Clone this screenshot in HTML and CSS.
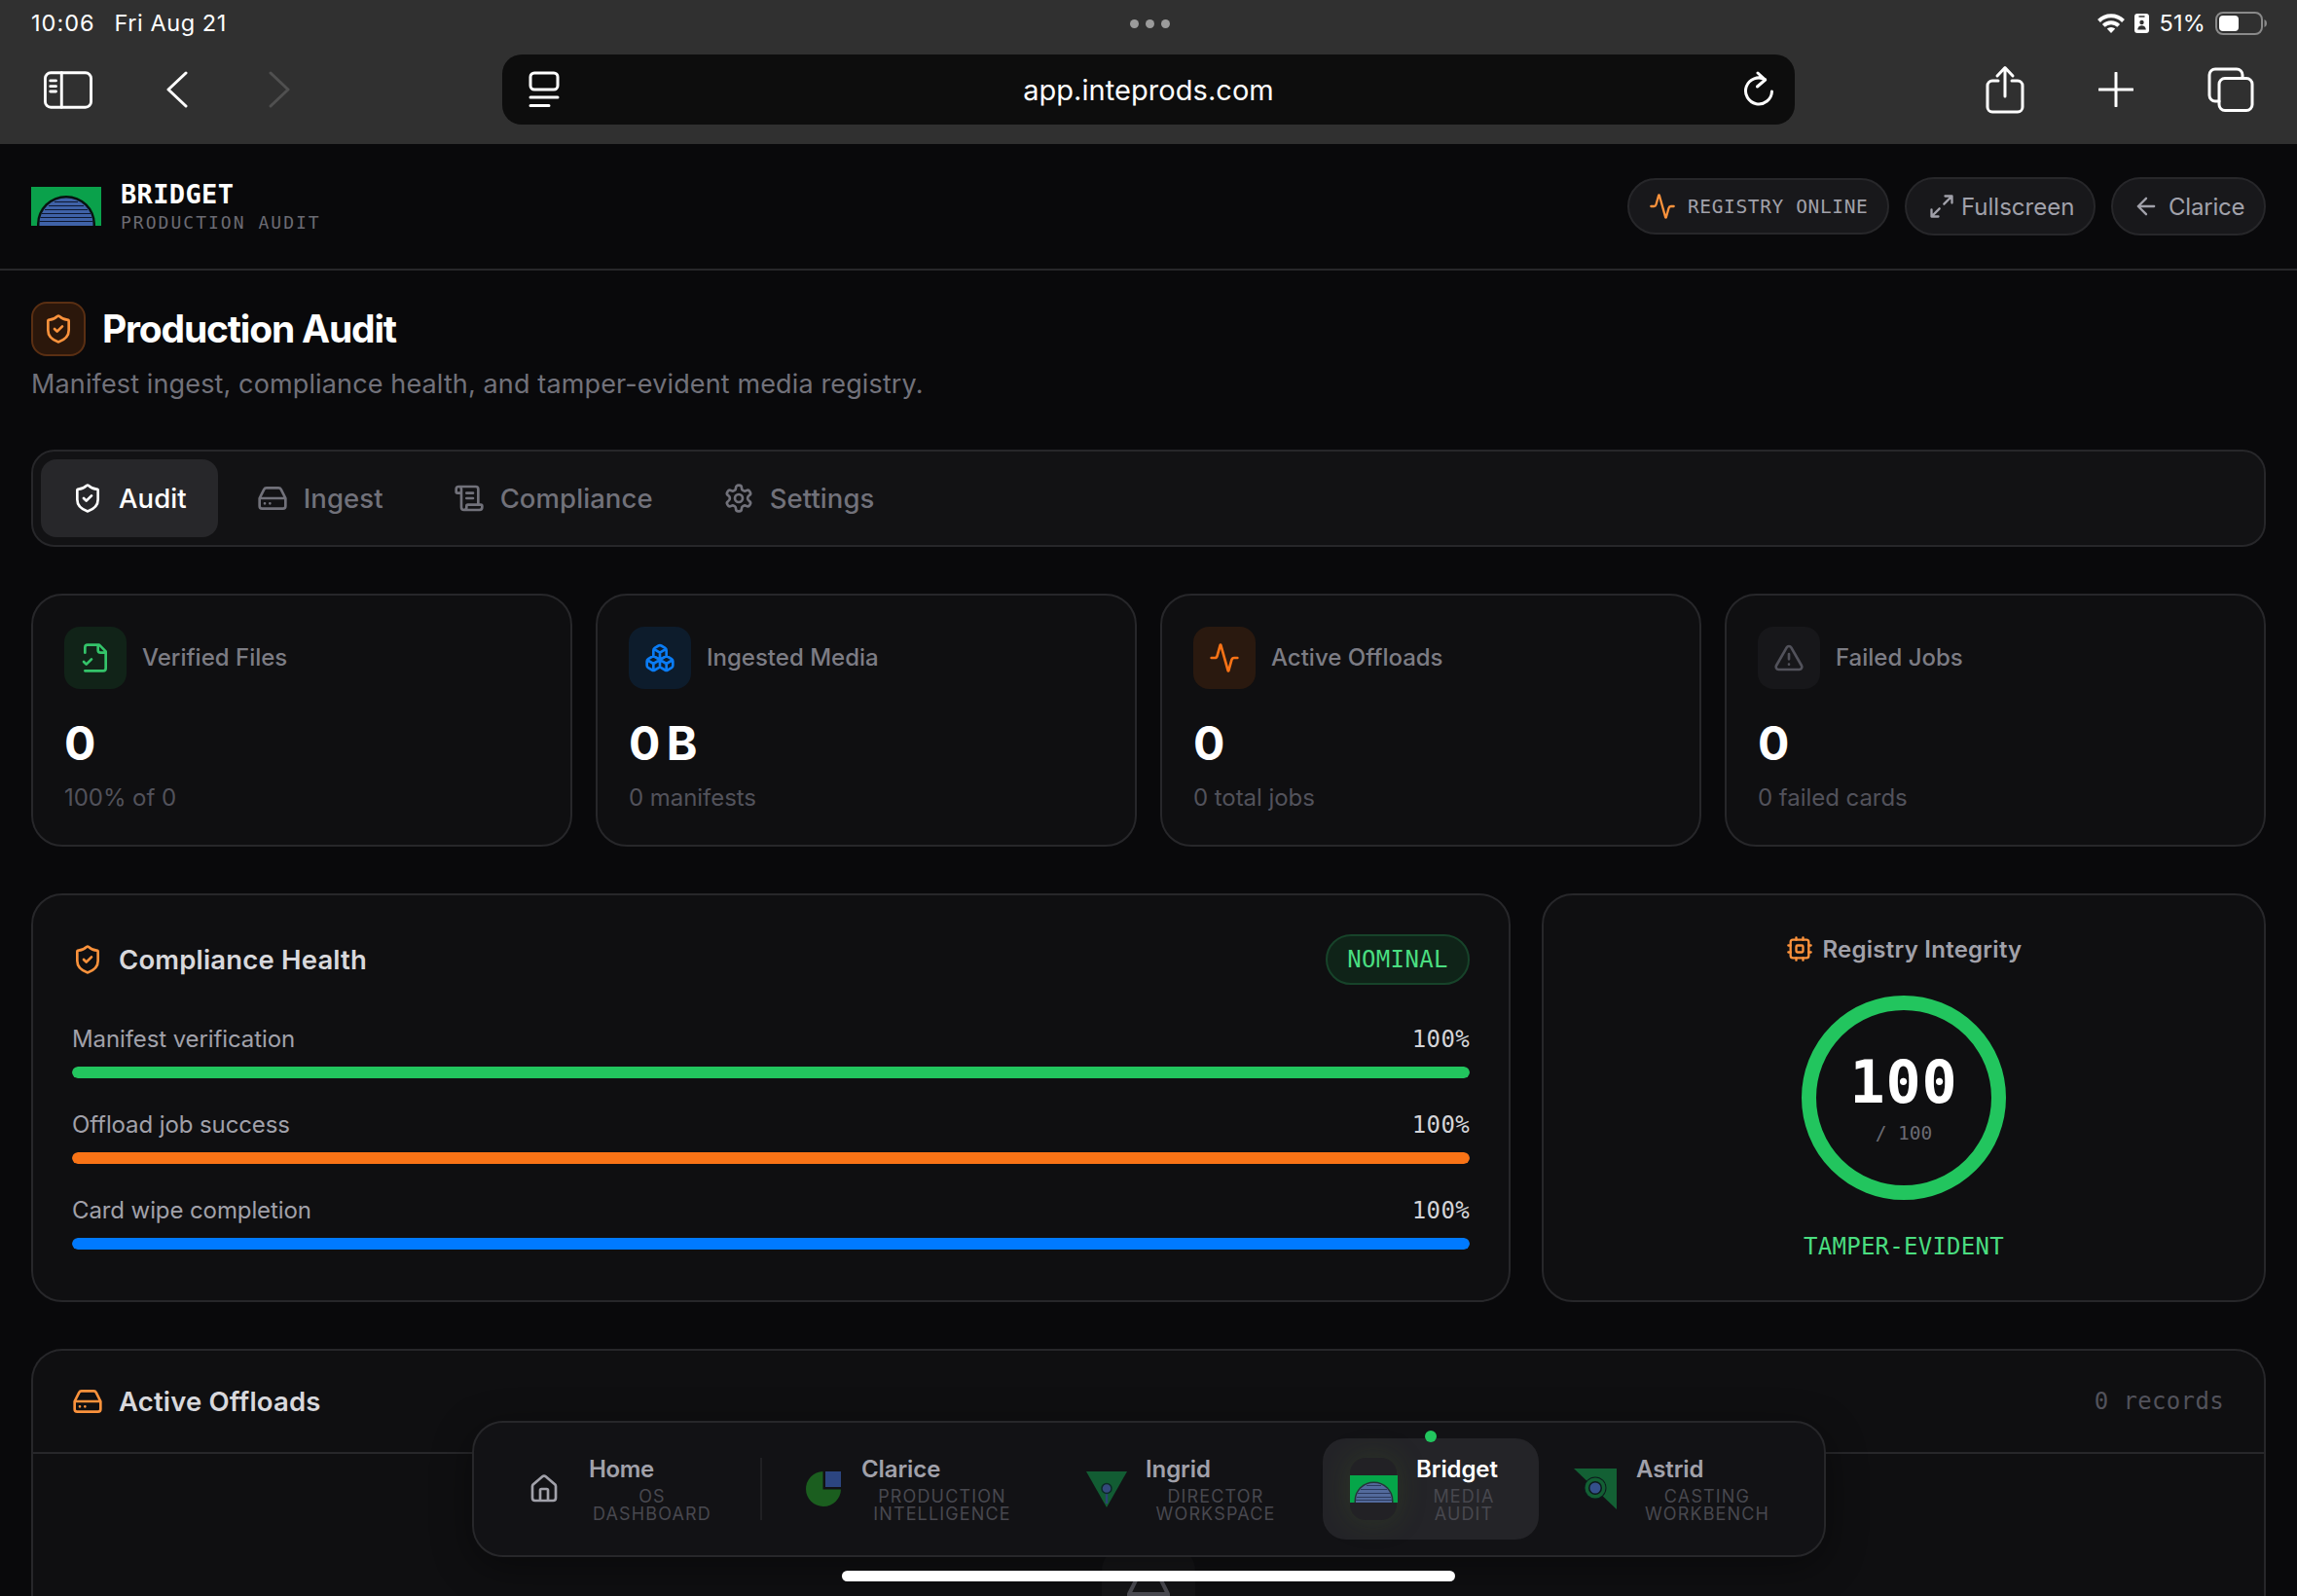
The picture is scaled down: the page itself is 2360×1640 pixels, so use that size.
FILE: index.html
```html
<!DOCTYPE html>
<html lang="en">
<head>
<meta charset="utf-8">
<title>Bridget – Production Audit</title>
<link rel="stylesheet" href="styles.css">
</head>
<body>
<svg class="defs" width="0" height="0">
  <symbol id="shield" viewBox="0 0 24 24"><path d="M20 13c0 5-3.5 7.5-7.66 8.95a1 1 0 0 1-.67-.01C7.5 20.5 4 18 4 13V6a1 1 0 0 1 1-1c2 0 4.5-1.2 6.24-2.72a1.17 1.17 0 0 1 1.52 0C14.51 3.81 17 5 19 5a1 1 0 0 1 1 1z"/><path d="m9 12 2 2 4-4"/></symbol>
  <symbol id="drive" viewBox="0 0 24 24"><path d="M22 12H2M5.45 5.11 2 12v6a2 2 0 0 0 2 2h16a2 2 0 0 0 2-2v-6l-3.45-6.89A2 2 0 0 0 16.76 4H7.24a2 2 0 0 0-1.79 1.11zM6 16h.01M10 16h.01"/></symbol>
  <symbol id="activity" viewBox="0 0 24 24"><path d="M22 12h-2.48a2 2 0 0 0-1.93 1.46l-2.35 8.36a.25.25 0 0 1-.48 0L9.24 2.18a.25.25 0 0 0-.48 0l-2.35 8.36A2 2 0 0 1 4.49 12H2"/></symbol>
  <symbol id="bridget" viewBox="0 0 72 40"><path fill="#0aa14b" d="M0 0h72v40H0z"/><path fill="#07130f" d="M6 40V38a30 29 0 0 1 60 0v2z"/><path fill="#3f62a8" d="M8.500 40V38a27.500 26.500 0 0 1 55 0v2z"/><path stroke="#0d1730" stroke-width="1" d="M24 15.500h24M18 19.500h36M14 23.500h44M11 27.500h50M9.500 31.500h53M8.500 35.500h55"/></symbol>
</svg>

<div class="chrome">
  <div class="status">
    <div class="status-left"><span class="time">10:06</span><span class="date">Fri Aug 21</span></div>
    <div class="dots"><i></i><i></i><i></i></div>
    <div class="status-right">
      <svg class="wifi" viewBox="0 0 28 20"><g fill="none" stroke="#fff" stroke-width="4"><path d="M1.500 7.500a17.700 17.700 0 0 1 25 0"/><path d="M6.300 12.400a11 11 0 0 1 15.400 0"/></g><path fill="#fff" d="M14 20l-4.200-4.400a6 6 0 0 1 8.400 0z"/></svg>
      <svg class="idcard" viewBox="0 0 15 20"><rect width="15" height="20" rx="3" fill="#fff"/><path fill="#303030" d="M4.500 2.200h6v1.500h-6z"/><circle cx="7.500" cy="9" r="2.200" fill="#303030"/><path fill="#303030" d="M3.200 16.500a4.300 4.300 0 0 1 8.600 0z"/></svg>
      <span class="percent">51%</span>
      <svg class="battery" viewBox="0 0 54 24"><rect x="1" y="1" width="47" height="22" rx="7" fill="none" stroke="#8a8a8a" stroke-width="2"/><rect x="4" y="4" width="20" height="16" rx="4" fill="#fff"/><path fill="#8a8a8a" d="M50.500 8c3.300 1.200 3.300 6.800 0 8z"/></svg>
    </div>
  </div>
  <div class="toolbar">
    <div class="tools-left">
      <svg class="i-side" viewBox="0 0 52 40"><rect x="1.500" y="1.500" width="49" height="37" rx="6"/><path d="M19 1.500v37M7 10h6M7 16h6M7 21.500h6"/></svg>
      <svg class="i-back" viewBox="0 0 24 38"><path d="M21 2 3 19l18 17"/></svg>
      <svg class="i-fwd" viewBox="0 0 24 38"><path d="M3 2l18 17L3 36"/></svg>
    </div>
    <div class="address">
      <svg class="i-reader" viewBox="0 0 32 38"><rect x="2" y="2" width="28" height="17" rx="4"/><path d="M2 27h28M2 35.500h19"/></svg>
      <span class="url">app.inteprods.com</span>
      <svg class="i-reload" viewBox="0 0 32 38"><path d="M22.500 8.600A13.500 13.500 0 1 0 29.500 21M15 2l7.700 7L14.500 16"/></svg>
    </div>
    <div class="tools-right">
      <svg class="i-share" viewBox="0 0 40 50"><path d="M13 16H7a5 5 0 0 0-5 5v22a5 5 0 0 0 5 5h26a5 5 0 0 0 5-5V21a5 5 0 0 0-5-5h-6M20 32V3M12 11l8-8.500L28 11"/></svg>
      <svg class="i-plus" viewBox="0 0 36 36"><path d="M18 1v34M1 18h34"/></svg>
      <svg class="i-tabs" viewBox="0 0 48 46"><path d="M12 35H8a6 6 0 0 1-6-6V8a6 6 0 0 1 6-6h22a6 6 0 0 1 6 6v3"/><rect x="12" y="11.500" width="34" height="33" rx="6"/></svg>
    </div>
  </div>
</div>

<header class="top">
  <div class="brand">
    <svg class="logo"><use href="#bridget"/></svg>
    <div class="brand-text"><span class="brand-name">BRIDGET</span><span class="brand-sub">PRODUCTION AUDIT</span></div>
  </div>
  <div class="pills">
    <div class="pill pill-reg"><svg class="ic s28 c-or"><use href="#activity"/></svg><span>REGISTRY ONLINE</span></div>
    <div class="pill pill-full"><svg class="ic s28" viewBox="0 0 24 24"><path d="M15 3h6v6M9 21H3v-6M21 3l-7 7M3 21l7-7"/></svg><span>Fullscreen</span></div>
    <div class="pill pill-clar"><svg class="ic s28" viewBox="0 0 24 24"><path d="m12 19-7-7 7-7M19 12H5"/></svg><span>Clarice</span></div>
  </div>
</header>

<main>
  <div class="title-row"><div class="title-badge"><svg class="ic s32"><use href="#shield"/></svg></div><h1>Production Audit</h1></div>
  <p class="lead">Manifest ingest, compliance health, and tamper-evident media registry.</p>

  <nav class="tabs">
    <div class="tab active"><svg class="ic s32"><use href="#shield"/></svg><span>Audit</span></div>
    <div class="tab"><svg class="ic s32"><use href="#drive"/></svg><span>Ingest</span></div>
    <div class="tab"><svg class="ic s32" viewBox="0 0 24 24"><path d="M15 12h-5M15 8h-5M19 17V5a2 2 0 0 0-2-2H4M8 21h12a2 2 0 0 0 2-2v-1a1 1 0 0 0-1-1H11a1 1 0 0 0-1 1v1a2 2 0 1 1-4 0V5a2 2 0 1 0-4 0v2a1 1 0 0 0 1 1h3"/></svg><span>Compliance</span></div>
    <div class="tab"><svg class="ic s32" viewBox="0 0 24 24"><path d="M12.220 2h-.44a2 2 0 0 0-2 2v.18a2 2 0 0 1-1 1.730l-.43.25a2 2 0 0 1-2 0l-.15-.08a2 2 0 0 0-2.730.73l-.22.38a2 2 0 0 0 .73 2.730l.15.1a2 2 0 0 1 1 1.720v.51a2 2 0 0 1-1 1.740l-.15.09a2 2 0 0 0-.73 2.730l.22.38a2 2 0 0 0 2.730.73l.15-.08a2 2 0 0 1 2 0l.43.25a2 2 0 0 1 1 1.730V20a2 2 0 0 0 2 2h.44a2 2 0 0 0 2-2v-.18a2 2 0 0 1 1-1.730l.43-.25a2 2 0 0 1 2 0l.15.08a2 2 0 0 0 2.730-.73l.22-.39a2 2 0 0 0-.73-2.730l-.15-.08a2 2 0 0 1-1-1.740v-.5a2 2 0 0 1 1-1.740l.15-.09a2 2 0 0 0 .73-2.730l-.22-.38a2 2 0 0 0-2.730-.73l-.15.08a2 2 0 0 1-2 0l-.43-.25a2 2 0 0 1-1-1.730V4a2 2 0 0 0-2-2z"/><circle cx="12" cy="12" r="3"/></svg><span>Settings</span></div>
  </nav>

  <section class="stats">
    <article class="card stat"><div class="stat-head"><div class="tile green"><svg class="ic s32" viewBox="0 0 24 24"><path d="M4 22h14a2 2 0 0 0 2-2V7l-5-5H6a2 2 0 0 0-2 2v4M14 2v4a2 2 0 0 0 2 2h4M3 15l2 2 4-4"/></svg></div><span>Verified Files</span></div><div class="value">0</div><div class="note">100% of 0</div></article>
    <article class="card stat"><div class="stat-head"><div class="tile blue"><svg class="ic s32" viewBox="0 0 24 24"><path d="M2.970 12.920A2 2 0 0 0 2 14.630v3.240a2 2 0 0 0 .97 1.710l3 1.800a2 2 0 0 0 2.060 0L12 19v-5.500l-5-3zM7 16.500l-4.740-2.850M7 16.500l5-3M7 16.500v5.170M12 13.500V19l3.970 2.380a2 2 0 0 0 2.060 0l3-1.800a2 2 0 0 0 .97-1.710v-3.240a2 2 0 0 0-.97-1.710L17 10.500zM17 16.500l-5-3M17 16.500l4.740-2.850M17 16.500v5.170M7.970 4.420A2 2 0 0 0 7 6.130v4.370l5 3 5-3V6.130a2 2 0 0 0-.97-1.710l-3-1.800a2 2 0 0 0-2.060 0zM12 8 7.260 5.150M12 8l4.740-2.850M12 13.500V8"/></svg></div><span>Ingested Media</span></div><div class="value">0 B</div><div class="note">0 manifests</div></article>
    <article class="card stat"><div class="stat-head"><div class="tile orange"><svg class="ic s32"><use href="#activity"/></svg></div><span>Active Offloads</span></div><div class="value">0</div><div class="note">0 total jobs</div></article>
    <article class="card stat"><div class="stat-head"><div class="tile gray"><svg class="ic s32" viewBox="0 0 24 24"><path d="m21.730 18-8-14a2 2 0 0 0-3.480 0l-8 14A2 2 0 0 0 4 21h16a2 2 0 0 0 1.730-3M12 9v4M12 17h.01"/></svg></div><span>Failed Jobs</span></div><div class="value">0</div><div class="note">0 failed cards</div></article>
  </section>

  <section class="health-row">
    <article class="card health">
      <div class="health-head"><svg class="ic s32 c-or"><use href="#shield"/></svg><h2>Compliance Health</h2><div class="nominal">NOMINAL</div></div>
      <div class="meter"><div class="meter-text"><span>Manifest verification</span><span class="pct">100%</span></div><div class="track"><div class="fill f-green" style="width:100%"></div></div></div>
      <div class="meter"><div class="meter-text"><span>Offload job success</span><span class="pct">100%</span></div><div class="track"><div class="fill f-orange" style="width:100%"></div></div></div>
      <div class="meter"><div class="meter-text"><span>Card wipe completion</span><span class="pct">100%</span></div><div class="track"><div class="fill f-blue" style="width:100%"></div></div></div>
    </article>
    <article class="card integrity">
      <div class="int-head"><svg class="ic s28 c-or" viewBox="0 0 24 24"><rect x="4" y="4" width="16" height="16" rx="2"/><rect x="9" y="9" width="6" height="6" rx="1"/><path d="M15 2v2M15 20v2M2 15h2M2 9h2M20 15h2M20 9h2M9 2v2M9 20v2"/></svg><span>Registry Integrity</span></div>
      <div class="ring"><span class="score">100</span><span class="of">/ 100</span></div>
      <div class="tamper">TAMPER-EVIDENT</div>
    </article>
  </section>

  <section class="card offloads">
    <div class="off-head"><svg class="ic s32 c-or"><use href="#drive"/></svg><h2>Active Offloads</h2><span class="records">0 records</span></div>
    <div class="empty"><div class="empty-tile"><svg class="ic s48"><use href="#drive"/></svg></div></div>
  </section>
</main>

<div class="dock">
  <div class="item home"><div class="slot"><svg class="ic s32" viewBox="0 0 24 24"><path d="M15 21v-8a1 1 0 0 0-1-1h-4a1 1 0 0 0-1 1v8M3 10a2 2 0 0 1 .71-1.530l7-6a2 2 0 0 1 2.580 0l7 6A2 2 0 0 1 21 10v9a2 2 0 0 1-2 2H5a2 2 0 0 1-2-2z"/></svg></div><div class="label"><b>Home</b><small>OS<br>DASHBOARD</small></div></div>
  <div class="divider"></div>
  <div class="item clarice"><div class="slot"><svg width="36" height="36" viewBox="0 0 36 36"><path fill="#1b5e1f" d="M17.500 0v18.500H36A18 18 0 1 1 17.500 0z"/><path fill="#2c4580" d="M20 0h16v16H20z"/></svg></div><div class="label"><b>Clarice</b><small>PRODUCTION<br>INTELLIGENCE</small></div></div>
  <div class="item ingrid"><div class="slot"><svg width="42" height="37" viewBox="0 0 42 37"><path fill="#125c33" d="M0 0h42L21 37z"/><path stroke="#2c4373" stroke-width="2.500" d="M21 20v13"/><circle cx="21" cy="17.500" r="5" fill="#34497c" stroke="#0c2a28" stroke-width="1.500"/></svg></div><div class="label"><b>Ingrid</b><small>DIRECTOR<br>WORKSPACE</small></div></div>
  <div class="item bridget on"><i class="live"></i><div class="slot glow"><svg width="49" height="28" viewBox="0 0 49 28"><path fill="#05a649" d="M0 0h49v28H0z"/><path fill="#26323a" d="M4.500 28v-2a20 19.500 0 0 1 40 0v2z"/><path fill="#536a9c" d="M6 28v-2a18.500 18 0 0 1 37 0v2z"/><path stroke="#2c3a5e" d="M17 10.500h15M11 14.500h27M8 18.500h33M7 22.500h35M6 25.500h37"/></svg></div><div class="label"><b>Bridget</b><small>MEDIA<br>AUDIT</small></div></div>
  <div class="item astrid"><div class="slot"><svg width="44" height="42" viewBox="0 0 44 42"><path fill="#136034" d="M0 0h44v42z"/><circle cx="22" cy="20" r="11.500" fill="#0d1a1c"/><circle cx="22" cy="20" r="10.500" fill="#136034"/><circle cx="22" cy="20" r="7" fill="#0d1a1c"/><circle cx="22" cy="20" r="5.500" fill="#34508a"/></svg></div><div class="label"><b>Astrid</b><small>CASTING<br>WORKBENCH</small></div></div>
</div>
<div class="home-bar"></div>
</body>
</html>
```
FILE: styles.css
```css
* { box-sizing: border-box; }
html, body { margin: 0; padding: 0; }
body { position: relative; width: 2360px; height: 1640px; overflow: hidden; background: #09090b; color: #fff; font-family: Inter, "Liberation Sans", sans-serif; font-size: 24px; white-space: nowrap; }
svg { display: block; flex: none; }
.defs { position: absolute; }
h1, h2, p { margin: 0; }
.ic { fill: none; stroke: currentColor; stroke-width: 2; stroke-linecap: round; stroke-linejoin: round; }
.s28 { width: 28px; height: 28px; }
.s32 { width: 32px; height: 32px; }
.s48 { width: 48px; height: 48px; }
.c-or { color: #fb923c; }

/* Browser chrome */
.chrome { height: 148px; background: #303030; }
.status { display: grid; grid-template-columns: 1fr auto 1fr; align-items: center; height: 48px; padding: 0 30px 0 32px; font-size: 23.500px; }
.status-left { display: flex; gap: 20px; padding-bottom: 2px; }
.time { letter-spacing: 1px; }
.date { letter-spacing: .55px; }
.dots { display: flex; gap: 7px; }
.dots i { width: 9px; height: 9px; border-radius: 50%; background: #9b9b9b; }
.status-right { display: flex; justify-content: flex-end; align-items: center; }
.wifi { width: 28px; height: 20px; margin-right: 10px; }
.idcard { width: 15px; height: 20px; margin-right: 10px; }
.percent { margin-right: 10px; padding-bottom: 2px; letter-spacing: .2px; }
.battery { width: 54px; height: 24px; }
.toolbar { display: flex; align-items: center; height: 88px; }
.toolbar svg { fill: none; stroke: #fff; stroke-width: 3; stroke-linecap: round; stroke-linejoin: round; }
.tools-left { display: flex; align-items: center; width: 516px; padding-left: 45px; }
.i-side { width: 50px; height: 39px; }
.i-back { width: 24px; height: 38px; margin-left: 75px; }
.i-fwd { width: 24px; height: 38px; margin-left: 81px; }
.toolbar .i-fwd { stroke: #505050; }
.address { display: flex; align-items: center; justify-content: space-between; width: 1328px; height: 72px; padding: 0 21px 0 27px; border-radius: 20px; background: #0d0d0d; }
.i-reader, .i-reload { width: 32px; height: 38px; }
.url { margin-right: 6px; font-size: 29px; letter-spacing: .05px; }
.tools-right { display: flex; align-items: center; padding-left: 196px; }
.i-share { width: 40px; height: 50px; }
.i-plus { width: 36px; height: 36px; margin-left: 76px; }
.i-tabs { width: 48px; height: 46px; margin-left: 76px; }

/* App header */
.top { display: flex; justify-content: space-between; align-items: center; height: 130px; padding: 0 32px; border-bottom: 2px solid #27272a; }
.brand { display: flex; align-items: center; gap: 20px; }
.logo { width: 72px; height: 40px; }
.brand-text { display: flex; flex-direction: column; align-items: flex-start; font-family: "DejaVu Sans Mono", monospace; }
.brand-name { font-size: 27px; line-height: 34px; font-weight: 700; letter-spacing: .35px; }
.brand-sub { font-size: 18px; line-height: 24px; letter-spacing: 2.020px; color: #6b6b73; }
.pills { display: flex; align-items: center; gap: 16px; color: #a1a1aa; }
.pill { display: flex; align-items: center; height: 60px; border: 2px solid #27272a; border-radius: 30px; background: #18181b; }
.pill-reg { width: 269px; height: 58px; gap: 12px; padding-left: 20px; font: 19.500px "DejaVu Sans Mono", monospace; letter-spacing: .62px; }
.pill-full { width: 196px; gap: 6px; padding-left: 22px; }
.pill-clar { width: 159px; gap: 9px; padding-left: 20px; letter-spacing: -.2px; }

/* Page heading and tabs */
main { padding: 32px 32px 0; }
.title-row { display: flex; align-items: center; gap: 17px; height: 56px; }
.title-badge { display: flex; align-items: center; justify-content: center; width: 56px; height: 56px; border: 2px solid #5a2f13; border-radius: 16px; background: #2b170b; color: #fb923c; }
h1 { font-size: 39px; font-weight: 700; line-height: 56px; letter-spacing: -1.200px; }
.lead { margin-top: 8px; padding-top: 1px; height: 40px; font-size: 27px; line-height: 40px; letter-spacing: .13px; color: #71717a; }
.tabs { display: flex; gap: 8px; height: 100px; margin-top: 48px; padding: 8px; border: 2px solid #27272a; border-radius: 24px; background: #121214; }
.tab { display: flex; align-items: center; gap: 16px; height: 80px; padding: 0 32px; border-radius: 16px; color: #71717a; font-size: 27.500px; font-weight: 500; letter-spacing: .08px; }
.tab.active { background: #27272a; color: #fff; }

/* Cards */
.card { border: 2px solid #27272a; border-radius: 32px; background: #0f0f11; }
.stats { display: grid; grid-template-columns: repeat(4, 1fr); gap: 24px; margin-top: 48px; }
.stat { height: 260px; padding: 32px; }
.stat-head { display: flex; align-items: center; gap: 16px; color: #7c7c84; font-weight: 500; }
.stat-head span { padding-bottom: 2px; }
.tile { display: flex; align-items: center; justify-content: center; width: 64px; height: 64px; border-radius: 16px; }
.green { background: #112318; color: #34c46a; }
.blue { background: #0d1c2c; color: #0a7cf5; }
.orange { background: #2a190f; color: #f97316; }
.gray { background: #17171a; color: #52525b; }
.value { margin-top: 28px; font-size: 48px; line-height: 56px; font-weight: 700; word-spacing: -5px; }
.note { margin-top: 12px; line-height: 32px; letter-spacing: -.05px; color: #52525b; }

.health-row { display: grid; grid-template-columns: 1520px 744px; gap: 32px; margin-top: 48px; }
.health { height: 420px; padding: 40px; }
.health-head { display: flex; align-items: center; gap: 16px; height: 52px; margin-bottom: 38px; }
h2 { flex: 1; font-size: 27.500px; font-weight: 600; letter-spacing: .17px; color: #d8d8dc; }
.nominal { display: flex; align-items: center; justify-content: center; width: 148px; height: 52px; border: 2px solid #17432a; border-radius: 26px; background: #0f2318; color: #4ade80; font: 24px "DejaVu Sans Mono", monospace; letter-spacing: .35px; }
.meter { margin-bottom: 30px; }
.meter-text { display: flex; justify-content: space-between; align-items: center; height: 36px; margin-bottom: 10px; padding-bottom: 1px; letter-spacing: -.1px; color: #a1a1aa; }
.pct { font: 24px "DejaVu Sans Mono", monospace; letter-spacing: .35px; color: #d4d4d8; }
.track { height: 12px; border-radius: 6px; background: #27272a; overflow: hidden; }
.fill { height: 12px; border-radius: 6px; }
.f-green { background: #22c55e; }
.f-orange { background: #f97316; }
.f-blue { background: #007aff; }
.integrity { display: flex; flex-direction: column; align-items: center; padding-top: 37px; }
.int-head { display: flex; align-items: center; gap: 10px; height: 36px; letter-spacing: .25px; color: #a1a1aa; font-weight: 600; }
.ring { display: flex; flex-direction: column; align-items: center; width: 210px; height: 210px; margin-top: 30px; padding-top: 44px; border: 15px solid #22c55e; border-radius: 50%; font-family: "DejaVu Sans Mono", monospace; }
.score { font-size: 60px; line-height: 60px; font-weight: 700; letter-spacing: .8px; }
.of { margin-top: 9px; font-size: 19.500px; line-height: 28px; color: #6b6b73; }
.tamper { margin-top: 32px; font: 24px/32px "DejaVu Sans Mono", monospace; letter-spacing: .25px; color: #4ade80; }

.offloads { height: 254px; margin-top: 48px; border-bottom: 0; border-radius: 32px 32px 0 0; overflow: hidden; }
.off-head { display: flex; align-items: center; gap: 16px; height: 106px; padding: 0 41px 0 40px; border-bottom: 2px solid #27272a; }
.records { font: 24px "DejaVu Sans Mono", monospace; letter-spacing: .35px; color: #52525b; }
.empty { display: flex; justify-content: center; padding-top: 96px; }
.empty-tile { display: flex; align-items: center; justify-content: center; width: 96px; height: 96px; border-radius: 24px; background: #151517; color: #4b4b52; }

/* App dock */
.dock { position: absolute; left: 485px; top: 1460px; display: flex; align-items: center; width: 1391px; height: 140px; padding-left: 20px; border: 2px solid #27272a; border-radius: 32px; background: #121215; box-shadow: 0 10px 40px rgba(0, 0, 0, .4); }
.item { position: relative; display: flex; align-items: center; justify-content: space-between; height: 104px; padding: 0 28px; border-radius: 24px; color: #a1a1aa; }
.slot { display: flex; align-items: center; justify-content: center; width: 48px; height: 64px; border-radius: 16px; }
.slot svg { margin: 0 -2px; }
.label { padding-top: 1px; }
.label b { display: block; margin-bottom: 5px; padding-left: 1px; font-weight: 600; line-height: 28px; letter-spacing: -.1px; }
.label small { display: block; font-size: 18px; line-height: 18px; text-align: center; color: #48484f; letter-spacing: 1.150px; }
.home { width: 258px; }
.home .label { width: 134px; }
.home b { padding-left: 2px; letter-spacing: -.4px; }
.divider { width: 2px; height: 64px; margin: 0 11px 0 16px; background: #202023; }
.clarice { width: 286px; margin-right: 5px; }
.clarice .label { width: 168px; }
.ingrid { width: 265px; margin-right: 9px; }
.ingrid .label { width: 146px; }
.bridget { width: 222px; margin-right: 6px; padding-right: 27px; }
.bridget .label { width: 100px; }
.astrid { width: 269px; }
.astrid .label { width: 148px; }
.on { background: #242428; color: #fff; }
.glow { background: #222125; box-shadow: 0 0 30px rgba(74, 110, 30, .25); }
.live { position: absolute; left: 105px; top: -8px; width: 12px; height: 12px; border-radius: 50%; background: #22c55e; }
.home-bar { position: absolute; left: 865px; top: 1614px; width: 630px; height: 11px; border-radius: 6px; background: #fff; }
```
